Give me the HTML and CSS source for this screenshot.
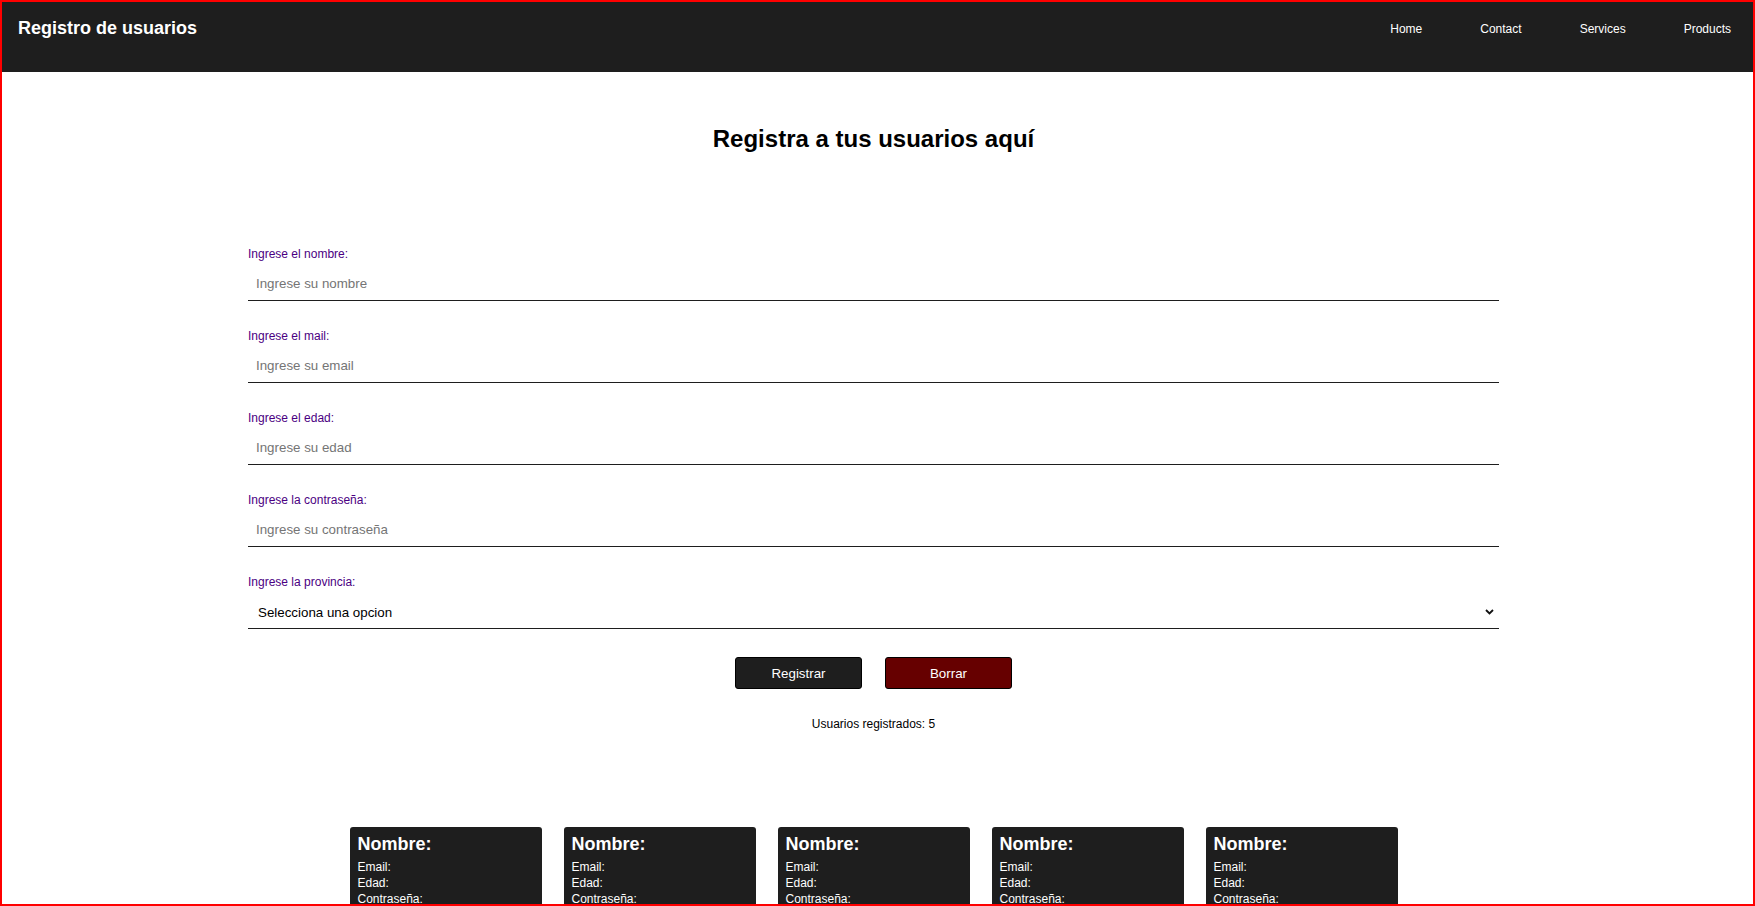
FILE: index.html
```html
<!DOCTYPE html>
<html lang="es">
<head>
<meta charset="utf-8">
<title>Registro de usuarios</title>
<link rel="stylesheet" href="styles.css">
</head>
<body>
<div class="frame">
  <header class="topbar">
    <div class="brand">Registro de usuarios</div>
    <nav class="nav">
      <a href="#">Home</a>
      <a href="#">Contact</a>
      <a href="#">Services</a>
      <a href="#">Products</a>
    </nav>
  </header>
  <main class="main">
    <h1 class="title">Registra a tus usuarios aquí</h1>
    <form class="form">
      <div class="field">
        <label class="label">Ingrese el nombre:</label>
        <input class="input" type="text" placeholder="Ingrese su nombre">
      </div>
      <div class="field">
        <label class="label">Ingrese el mail:</label>
        <input class="input" type="text" placeholder="Ingrese su email">
      </div>
      <div class="field">
        <label class="label">Ingrese el edad:</label>
        <input class="input" type="text" placeholder="Ingrese su edad">
      </div>
      <div class="field">
        <label class="label">Ingrese la contraseña:</label>
        <input class="input" type="text" placeholder="Ingrese su contraseña">
      </div>
      <div class="field">
        <label class="label">Ingrese la provincia:</label>
        <div class="select-wrap">
          <select class="select">
            <option>Selecciona una opcion</option>
          </select>
          <svg class="chevron" width="9" height="6" viewBox="0 0 9 6"><path d="M1 1 L4.5 4.5 L8 1" fill="none" stroke="#111" stroke-width="1.8"/></svg>
        </div>
      </div>
      <div class="actions">
        <button type="button" class="btn btn-dark">Registrar</button>
        <button type="button" class="btn btn-red">Borrar</button>
      </div>
      <p class="count">Usuarios registrados: 5</p>
    </form>
    <section class="cards">
      <div class="card"><h3>Nombre:</h3><p>Email:</p><p>Edad:</p><p>Contraseña:</p><p>Provincia:</p></div>
      <div class="card"><h3>Nombre:</h3><p>Email:</p><p>Edad:</p><p>Contraseña:</p><p>Provincia:</p></div>
      <div class="card"><h3>Nombre:</h3><p>Email:</p><p>Edad:</p><p>Contraseña:</p><p>Provincia:</p></div>
      <div class="card"><h3>Nombre:</h3><p>Email:</p><p>Edad:</p><p>Contraseña:</p><p>Provincia:</p></div>
      <div class="card"><h3>Nombre:</h3><p>Email:</p><p>Edad:</p><p>Contraseña:</p><p>Provincia:</p></div>
    </section>
  </main>
</div>
</body>
</html>
```
FILE: styles.css
```css
* { box-sizing: border-box; }
html, body { margin: 0; padding: 0; }
body {
  font-family: "Liberation Sans", Arial, sans-serif;
  background: #fff;
  color: #000;
}
.frame {
  height: 906px;
  border: 2px solid #ff0000;
  overflow: hidden;
}
.topbar {
  height: 70px;
  background: #1e1e1e;
  display: flex;
  justify-content: space-between;
  align-items: flex-start;
  padding: 16px 22px 0 16px;
}
.brand {
  color: #fff;
  font-size: 18px;
  font-weight: bold;
  line-height: 21px;
}
.nav {
  display: flex;
  gap: 58px;
  padding-top: 1px;
}
.nav a {
  color: #fff;
  text-decoration: none;
  font-size: 12px;
  line-height: 21px;
}
.main {
  display: flex;
  flex-direction: column;
  align-items: center;
  padding-right: 8px;
}
.title {
  margin: 54px 0 0;
  font-size: 24px;
  line-height: 26px;
  font-weight: bold;
}
.form {
  width: 1251px;
  margin-top: 95px;
  display: flex;
  flex-direction: column;
  gap: 28px;
}
.field {
  display: flex;
  flex-direction: column;
  gap: 5px;
}
.label {
  font-size: 12px;
  line-height: 14px;
  color: #4b0082;
}
.input, .select {
  height: 35px;
  border: none;
  border-bottom: 1px solid #1e1e1e;
  outline: none;
  background: transparent;
  font-family: "Liberation Sans", Arial, sans-serif;
  font-size: 13.333px;
  padding: 0 8px;
  width: 100%;
  color: #000;
}
.input::placeholder { color: #757575; }
.select-wrap { position: relative; }
.select {
  -webkit-appearance: none;
  appearance: none;
  padding: 3px 8px 0 10px;
  border-radius: 0;
}
.chevron {
  position: absolute;
  right: 5px;
  top: 15px;
}
.actions {
  display: flex;
  justify-content: center;
  gap: 23px;
  margin-top: 0;
}
.btn {
  width: 127px;
  height: 32px;
  border: 1px solid #000;
  border-radius: 3px;
  color: #fff;
  font-family: "Liberation Sans", Arial, sans-serif;
  font-size: 13.333px;
}
.btn-dark { background: #1e1e1e; }
.btn-red { background: #660000; }
.count {
  margin: 0;
  text-align: center;
  font-size: 12px;
  line-height: 14px;
}
.cards {
  margin-top: 96px;
  display: flex;
  gap: 22px;
}
.card {
  width: 192px;
  background: #1e1e1e;
  border-radius: 3px;
  color: #fff;
  padding: 7px 8px 10px;
}
.card h3 {
  margin: 0 0 4px;
  font-size: 18px;
  line-height: 21px;
}
.card p {
  margin: 0;
  font-size: 12px;
  line-height: 16px;
}
```
